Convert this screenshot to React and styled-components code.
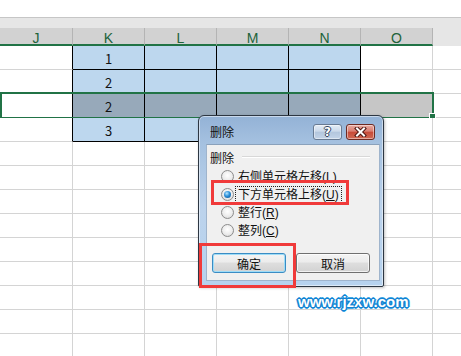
import React from 'react'
import styled, { createGlobalStyle } from 'styled-components'

const GlobalStyle = createGlobalStyle`
  html, body { margin: 0; padding: 0; background: #fff; overflow: hidden; }
  body { font-family: "Noto Sans CJK SC", "Liberation Sans", sans-serif; }
`;

const Page = styled.div`
  position: relative;
  width: 461px;
  height: 356px;
  overflow: hidden;
  background: #fff;
`;

const TopStrip = styled.div`
  height: 17px;
  background: #fff;
  border-bottom: 1px solid #c6c6c6;
`;

const Band = styled.div`
  height: 10px;
  background: #e6e6e6;
`;

const HeaderRow = styled.div`
  display: grid;
  grid-template-columns: 73px repeat(5, 72px) 1fr;
`;

const HeaderCell = styled.div`
  height: 18px;
  box-sizing: border-box;
  padding-top: 4px;
  background: ${(p) => (p.$blank ? '#e6e6e6' : '#d2d2d2')};
  border-right: ${(p) => (p.$blank ? 'none' : '1px solid #b4b4b4')};
  border-bottom: 2px solid ${(p) => (p.$blank ? '#e6e6e6' : '#217346')};
  color: #21633a;
  font-family: "Liberation Sans", Arial, sans-serif;
  font-size: 14px;
  line-height: 12px;
  text-align: center;
`;

const Row = styled.div`
  position: relative;
  display: grid;
  grid-template-columns: 73px repeat(5, 72px) 1fr;
`;

const Cell = styled.div`
  height: 24px;
  box-sizing: border-box;
  padding-top: 2px;
  display: flex;
  align-items: center;
  justify-content: center;
  background: ${(p) => p.$bg || '#fff'};
  border-right: ${(p) => (p.$last ? 'none' : `1px solid ${p.$edge || '#d4d4d4'}`)};
  border-bottom: 1px solid ${(p) => p.$under || '#d4d4d4'};
  font-size: 13px;
  color: #111;
`;

const Selection = styled.div`
  position: absolute;
  left: 0;
  top: -2px;
  width: 434px;
  height: 27px;
  box-sizing: border-box;
  border: 2px solid #217346;
  pointer-events: none;
`;

const FillHandle = styled.div`
  position: absolute;
  right: -4px;
  bottom: -3px;
  width: 7px;
  height: 7px;
  box-sizing: border-box;
  background: #217346;
  border: 1px solid #fff;
`;

/* ---------- dialog ---------- */

const Dialog = styled.div`
  position: absolute;
  left: 198px;
  top: 115px;
  width: 186px;
  height: 172px;
  box-sizing: border-box;
  display: flex;
  flex-direction: column;
  border: 1px solid #2d3743;
  border-radius: 6px 6px 2px 2px;
  background: linear-gradient(to bottom, #93b2d6 0%, #a5c1e0 16%, #bcd3ec 55%, #b6d2ee 100%);
  box-shadow: inset 0 0 0 1px rgba(255, 255, 255, 0.5), 1px 1px 3px rgba(0, 0, 0, 0.25);
`;

const TitleBar = styled.div`
  height: 28px;
  box-sizing: border-box;
  padding: 4px 8px 0 11px;
  display: flex;
  align-items: center;
  gap: 4px;
`;

const Title = styled.div`
  flex: 1;
  font-size: 12px;
  line-height: 14px;
  color: #111;
`;

const CaptionButton = styled.div`
  width: 29px;
  height: 16px;
  box-sizing: border-box;
  display: flex;
  align-items: center;
  justify-content: center;
  border: 1px solid ${(p) => (p.$close ? '#6e2a22' : '#687a92')};
  border-radius: 3px;
  background: ${(p) =>
    p.$close
      ? 'linear-gradient(to bottom, #e8aba2 0%, #d97d70 45%, #c74a38 50%, #cf6a55 100%)'
      : 'linear-gradient(to bottom, #e4ecf6 0%, #cbd9ea 45%, #b3c6dd 50%, #c3d4e8 100%)'};
  box-shadow: inset 0 0 0 1px rgba(255, 255, 255, 0.45);
`;

const HelpMark = styled.span`
  font-family: "DejaVu Sans", sans-serif;
  font-weight: bold;
  font-size: 12px;
  line-height: 12px;
  color: #fff;
  text-shadow: 1px 0 #34465e, -1px 0 #34465e, 0 1px #34465e, 0 -1px #34465e;
`;

const Client = styled.div`
  flex: 1;
  margin: 0 3px 5px 7px;
  box-sizing: border-box;
  background: #f0f0f0;
  border: 1px solid #9fb4cc;
  border-top-color: #8aa1bb;
  padding: 3px 0 0 0;
  display: flex;
  flex-direction: column;
`;

const GroupHeader = styled.div`
  height: 18px;
  display: flex;
  align-items: center;
  gap: 8px;
  padding: 0 9px 0 3px;
  font-size: 12px;
  color: #111;
`;

const GroupLine = styled.div`
  flex: 1;
  height: 1px;
  background: #d8d8d8;
  border-bottom: 1px solid #fff;
`;

const Options = styled.div`
  margin-top: 1px;
  display: flex;
  flex-direction: column;
`;

const Option = styled.div`
  position: relative;
  height: 18px;
  display: flex;
  align-items: center;
  gap: 2px;
  padding-left: 14px;
  font-size: 12px;
  color: #111;

  &::after {
    content: '';
    display: ${(p) => (p.$marked ? 'block' : 'none')};
    position: absolute;
    left: 4px;
    top: -5px;
    width: 138px;
    height: 25px;
    box-sizing: border-box;
    border: 3px solid #f03a3a;
  }
`;

const Radio = styled.span`
  position: relative;
  width: 13px;
  height: 13px;
  box-sizing: border-box;
  border-radius: 50%;
  border: 1px solid #8c8c8c;
  background: radial-gradient(circle at 50% 40%, #ffffff 0%, #ececec 55%, #cfcfcf 100%);

  &::after {
    content: '';
    display: ${(p) => (p.$checked ? 'block' : 'none')};
    position: absolute;
    left: 2px;
    top: 2px;
    width: 7px;
    height: 7px;
    border-radius: 50%;
    background: radial-gradient(circle at 40% 35%, #b6e6ff 0%, #2b8fd8 45%, #0d4c88 100%);
  }
`;

const Label = styled.span`
  padding: 0 2px;
  line-height: 13px;
  outline: ${(p) => (p.$focused ? '1px dotted #222' : 'none')};
`;

const AccessKey = styled.span`
  font-family: "Liberation Sans", Arial, sans-serif;
  font-size: 12px;
`;

const ButtonRow = styled.div`
  margin-top: 14px;
  padding-left: 5px;
  display: flex;
  gap: 10px;
`;

const Button = styled.div`
  position: relative;
  width: 74px;
  height: 20px;
  box-sizing: border-box;
  display: flex;
  align-items: center;
  justify-content: center;
  font-size: 12px;
  color: #111;
  border-radius: 3px;
  border: 1px solid ${(p) => (p.$default ? '#3a8cc4' : '#707070')};
  background: linear-gradient(to bottom, #f4f4f4 0%, #ececec 45%, #dedede 50%, #d2d2d2 100%);
  box-shadow: inset 0 0 0 1px ${(p) => (p.$default ? '#9edcf7' : 'rgba(255,255,255,0.7)')};

  &::after {
    content: '';
    display: ${(p) => (p.$marked ? 'block' : 'none')};
    position: absolute;
    left: -14px;
    top: -11px;
    width: 97px;
    height: 45px;
    box-sizing: border-box;
    border: 3px solid #f03a3a;
  }
`;

const Watermark = styled.div`
  position: absolute;
  left: 298px;
  top: 294px;
  font-family: "Liberation Sans", Arial, sans-serif;
  font-weight: bold;
  font-size: 15px;
  line-height: 15px;
  color: #fff;
  text-shadow:
    1px 0 #1383d2, -1px 0 #1383d2, 0 1px #1383d2, 0 -1px #1383d2,
    1px 1px #1383d2, -1px -1px #1383d2, 1px -1px #1383d2, -1px 1px #1383d2,
    2px 0 #3ea6e6, -2px 0 #3ea6e6, 0 2px #3ea6e6, 0 -2px #3ea6e6;
`;

const COLS = ['J', 'K', 'L', 'M', 'N', 'O'];

const rows = [
  { value: '1', table: true },
  { value: '2', table: true },
  { value: '2', table: true, selected: true },
  { value: '3', table: true },
  ...Array.from({ length: 9 }, () => ({ value: '', table: false })),
];

const options = [
  { text: '右侧单元格左移', key: 'L' },
  { text: '下方单元格上移', key: 'U', checked: true },
  { text: '整行', key: 'R' },
  { text: '整列', key: 'C' },
];

const cellProps = (row, col) => {
  const inTable = row.table && col >= 1 && col <= 4;
  if (inTable) {
    return {
      $bg: row.selected ? '#97a9ba' : '#bdd7ee',
      $edge: '#000',
      $under: '#000',
    };
  }
  if (row.table && col === 0) return { $edge: '#000' };
  if (row.selected && col === 5) return { $bg: '#c6c6c6' };
  return {};
};

const CloseGlyph = () => (
  <svg width="13" height="10" viewBox="0 0 13 10">
    <path d="M3 1.5 L10 8.5 M10 1.5 L3 8.5" stroke="#4e1510" strokeWidth="4" strokeLinecap="square" />
    <path d="M3 1.5 L10 8.5 M10 1.5 L3 8.5" stroke="#fff" strokeWidth="2" strokeLinecap="square" />
  </svg>
);

const App = () => {
  return (
    <Page>
      <GlobalStyle />
      <TopStrip />
      <Band />
      <HeaderRow>
        {COLS.map((c) => (
          <HeaderCell key={c}>{c}</HeaderCell>
        ))}
        <HeaderCell $blank />
      </HeaderRow>

      {rows.map((row, r) => (
        <Row key={r}>
          {COLS.map((c, i) => (
            <Cell key={c} {...cellProps(row, i)}>
              {i === 1 ? row.value : ''}
            </Cell>
          ))}
          <Cell $last />
          {row.selected && (
            <Selection>
              <FillHandle />
            </Selection>
          )}
        </Row>
      ))}

      <Dialog>
        <TitleBar>
          <Title>删除</Title>
          <CaptionButton>
            <HelpMark>?</HelpMark>
          </CaptionButton>
          <CaptionButton $close>
            <CloseGlyph />
          </CaptionButton>
        </TitleBar>
        <Client>
          <GroupHeader>
            删除
            <GroupLine />
          </GroupHeader>
          <Options>
            {options.map((o) => (
              <Option key={o.key} $marked={o.checked}>
                <Radio $checked={o.checked} />
                <Label $focused={o.checked}>
                  {o.text}
                  <AccessKey>(<u>{o.key}</u>)</AccessKey>
                </Label>
              </Option>
            ))}
          </Options>
          <ButtonRow>
            <Button $default $marked>确定</Button>
            <Button>取消</Button>
          </ButtonRow>
        </Client>
      </Dialog>

      <Watermark>www.rjzxw.com</Watermark>
    </Page>
  )
}

export default App
